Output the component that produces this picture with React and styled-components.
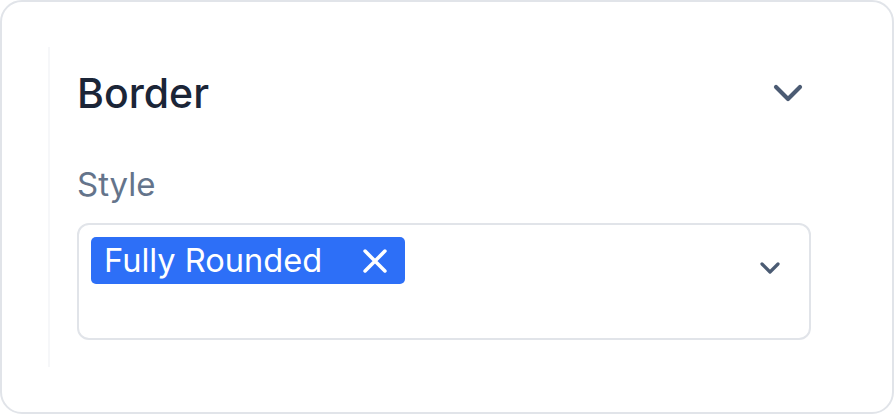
import styled, { createGlobalStyle } from "styled-components";

const GlobalStyle = createGlobalStyle`
  html, body {
    margin: 0;
    padding: 0;
    background: #ffffff;
    font-family: Inter, "Noto Sans", sans-serif;
  }
`;

const Card = styled.div`
  box-sizing: border-box;
  width: 894px;
  height: 414px;
  border: 2px solid #e1e4e9;
  border-radius: 22px;
  background: #ffffff;
  padding: 45px 46px 46px 46px;
`;

const Panel = styled.div`
  box-sizing: border-box;
  height: 320px;
  border-left: 2px solid #f6f7f9;
  padding: 21px 35px 0 27px;
`;

const Header = styled.div`
  display: flex;
  align-items: center;
  justify-content: space-between;
  height: 50px;
`;

const Title = styled.h2`
  margin: 0;
  font-size: 41px;
  line-height: 50px;
  font-weight: 500;
  color: #1b2537;
`;

const IconButton = styled.span`
  display: flex;
  margin-right: -1px;
  color: #4b5b73;
`;

const Label = styled.div`
  margin-top: 46px;
  font-size: 33px;
  line-height: 40px;
  color: #64748b;
`;

const Select = styled.div`
  box-sizing: border-box;
  margin-top: 19px;
  height: 117px;
  border: 2px solid #e1e4e9;
  border-radius: 12px;
  padding: 12px 23px 0 12px;
  display: flex;
  align-items: flex-start;
  justify-content: space-between;
`;

const Tag = styled.span`
  display: inline-flex;
  align-items: center;
  gap: 36px;
  height: 47px;
  padding: 0 13px 0 13px;
  border-radius: 5px;
  background: #2d6ff7;
  color: #ffffff;
  font-size: 32.6px;
  line-height: 47px;
`;

const SelectChevron = styled.span`
  display: flex;
  margin-top: 15px;
  color: #4b5b73;
`;

const Chevron = ({ size, stroke }) => (
  <svg width={size} height={size} viewBox="0 0 24 24" fill="none" stroke="currentColor" strokeWidth={stroke} strokeLinecap="round" strokeLinejoin="round">
    <path d="M6 9l6 6 6-6" />
  </svg>
);

const Close = () => (
  <svg width="34" height="34" viewBox="0 0 24 24" fill="none" stroke="currentColor" strokeWidth="2.5" strokeLinecap="round">
    <path d="M5 5l14 14M19 5L5 19" />
  </svg>
);

export default function App() {
  return (
    <>
      <GlobalStyle />
      <Card>
        <Panel>
          <Header>
            <Title>Border</Title>
            <IconButton>
              <Chevron size={48} stroke={2.1} />
            </IconButton>
          </Header>
          <Label>Style</Label>
          <Select>
            <Tag>
              Fully Rounded
              <Close />
            </Tag>
            <SelectChevron>
              <Chevron size={32} stroke={2.4} />
            </SelectChevron>
          </Select>
        </Panel>
      </Card>
    </>
  );
}
